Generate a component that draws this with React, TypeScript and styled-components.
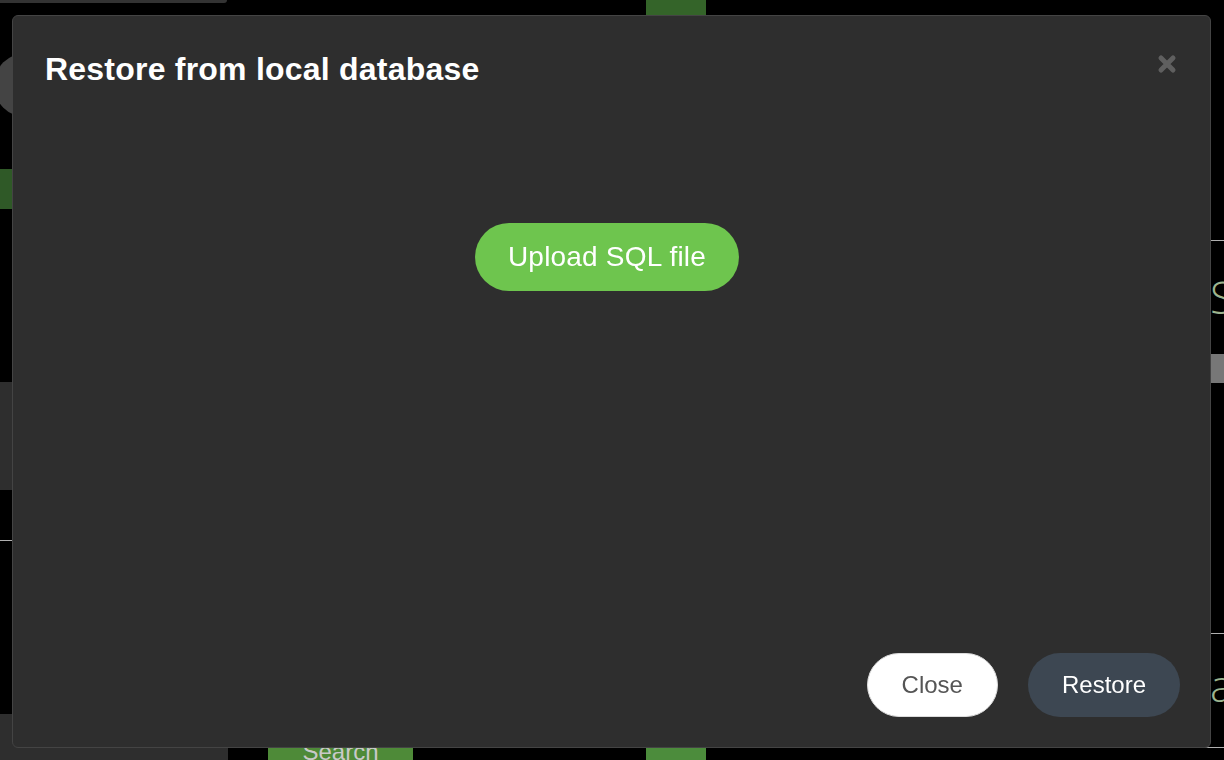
import React from "react";
import styled, { createGlobalStyle } from "styled-components";

const Global = createGlobalStyle`
  html, body { margin: 0; padding: 0; background: #000; }
  body { font-family: "Liberation Sans", Arial, Helvetica, sans-serif; overflow: hidden; }
  * { box-sizing: border-box; }
`;

/* ---------- background page (mostly hidden by the modal) ---------- */
const Page = styled.div`
  width: 1224px;
  height: 760px;
  display: grid;
  grid-template-columns: 228px 418px 60px 1fr;
  background: #000;
  overflow: hidden;
`;

const Sidebar = styled.aside`
  display: flex;
  flex-direction: column;
  height: 760px;
`;

const TopBar = styled.div`
  height: 3px;
  width: 227px;
  background: #333;
  border-radius: 0 0 3px 0;
`;

const Avatar = styled.div`
  margin-top: 50px;
  height: 64px;
  width: 64px;
  background: #444;
  border-radius: 50%;
  margin-left: -6px;
`;

const NavActive = styled.div`
  margin-top: 52px;
  height: 40px;
  background: #2f5927;
`;

const NavBlock = styled.div`
  margin-top: 173px;
  height: 108px;
  background: #2e2e2e;
`;

const Divider = styled.div<{ $top: number }>`
  margin-top: ${(p) => p.$top}px;
  height: 1px;
  background: #b0b0b0;
`;

const SidebarFooter = styled.div`
  margin-top: auto;
  height: 46px;
  background: #2e2e2e;
`;

const MainCol = styled.div`
  display: flex;
  flex-direction: column;
  justify-content: flex-end;
  padding-left: 40px;
`;

const SearchButton = styled.div`
  width: 145px;
  height: 56px;
  margin-bottom: -20px;
  background: #4e8a38;
  border-radius: 10px;
  color: #c9c9c9;
  font-size: 24px;
  display: flex;
  align-items: center;
  justify-content: center;
`;

const GreenStrip = styled.div`
  display: flex;
  flex-direction: column;
  justify-content: space-between;
`;

const StripTop = styled.div`
  height: 15px;
  background: #346429;
`;

const StripBottom = styled.div`
  height: 13px;
  background: #4c8c3c;
`;

const RightCol = styled.div`
  display: flex;
  flex-direction: column;
`;

const BigText = styled.div<{ $top: number }>`
  margin-top: ${(p) => p.$top}px;
  margin-left: 504px;
  font-family: "Open Sans", sans-serif;
  font-weight: 300;
  font-size: 44px;
  line-height: 44px;
  color: #9db48f;
  white-space: nowrap;
`;

const GrayBar = styled.div`
  margin-top: 35px;
  height: 29px;
  background: #777;
`;

/* ---------- modal ---------- */
const Modal = styled.div`
  position: fixed;
  left: 12px;
  top: 15px;
  width: 1199px;
  height: 733px;
  background: #2e2e2e;
  border: 1px solid #444;
  border-radius: 6px;
  display: flex;
  flex-direction: column;
`;

const Header = styled.div`
  display: flex;
  justify-content: space-between;
  align-items: flex-start;
  padding: 35px 32px 0 32px;
`;

const Title = styled.h2`
  margin: 0;
  font-size: 32px;
  line-height: 36px;
  font-weight: 700;
  letter-spacing: 0.22px;
  color: #fff;
`;

const CloseIcon = styled.button`
  margin-top: 2px;
  padding: 0;
  width: 22px;
  height: 22px;
  border: 0;
  background: transparent;
  display: flex;
  align-items: center;
  justify-content: center;
  cursor: pointer;
`;

const Body = styled.div`
  flex: 1;
  display: flex;
  justify-content: center;
  align-items: flex-start;
  padding: 136px 42px 0 33px;
`;

const PillButton = styled.button<{ $variant: "upload" | "light" | "dark" }>`
  font-family: "Liberation Sans", Arial, Helvetica, sans-serif;
  border-radius: 40px;
  cursor: pointer;
  display: inline-flex;
  align-items: center;
  justify-content: center;
  white-space: nowrap;
  ${(p) =>
    p.$variant === "upload"
      ? `height: 68px; padding: 0 33px; font-size: 28px; letter-spacing: 0.2px; background: #6ec54e; color: #fff; border: 0;`
      : p.$variant === "light"
      ? `height: 64px; padding: 0 34px; font-size: 24px; background: #fff; color: #555; border: 1px solid #dcdcdc;`
      : `height: 64px; padding: 0 34px; font-size: 24px; background: #3d4752; color: #fff; border: 0;`}
`;

const Footer = styled.div`
  display: flex;
  justify-content: flex-end;
  gap: 30px;
  padding: 0 30px 30px 0;
`;

export default function App() {
  return (
    <>
      <Global />
      <Page>
        <Sidebar>
          <TopBar />
          <Avatar />
          <NavActive />
          <NavBlock />
          <Divider $top={50} />
          <SidebarFooter />
        </Sidebar>
        <MainCol>
          <SearchButton>Search</SearchButton>
        </MainCol>
        <GreenStrip>
          <StripTop />
          <StripBottom />
        </GreenStrip>
        <RightCol>
          <Divider $top={240} />
          <BigText $top={34}>Status</BigText>
          <GrayBar />
          <Divider $top={250} />
          <BigText $top={29}>activity</BigText>
          <Divider $top={40} />
        </RightCol>
      </Page>

      <Modal role="dialog" aria-label="Restore from local database">
        <Header>
          <Title>Restore from local database</Title>
          <CloseIcon aria-label="Close">
            <svg width="20" height="20" viewBox="0 0 20 20">
              <path
                d="M4 4 L16 16 M16 4 L4 16"
                stroke="#5f5f5f"
                strokeWidth="5"
                strokeLinecap="round"
              />
            </svg>
          </CloseIcon>
        </Header>
        <Body>
          <PillButton $variant="upload">Upload SQL file</PillButton>
        </Body>
        <Footer>
          <PillButton $variant="light">Close</PillButton>
          <PillButton $variant="dark">Restore</PillButton>
        </Footer>
      </Modal>
    </>
  );
}
